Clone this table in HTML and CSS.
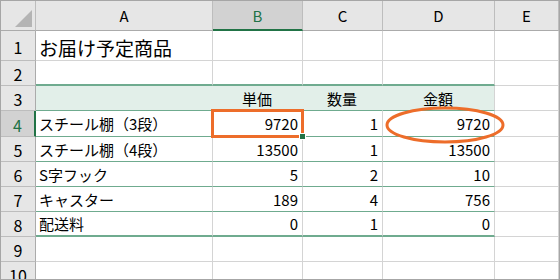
FILE: index.html
```html
<!DOCTYPE html>
<html lang="ja">
<head>
    <meta charset="UTF-8">
    <meta name="viewport" content="width=device-width, initial-scale=1.0">
    <title>お届け予定商品</title>
    <link rel="stylesheet" href="styles.css">
</head>
<body>
    <div class="sheet">
        <!-- column headers -->
        <div class="row head-row">
            <div class="corner"><span class="tri"></span></div>
            <div class="col-head">A</div>
            <div class="col-head selected">B</div>
            <div class="col-head">C</div>
            <div class="col-head">D</div>
            <div class="col-head">E</div>
        </div>

        <div class="row tall">
            <div class="row-head">1</div>
            <div class="cell title">お届け予定商品</div>
            <div class="cell"></div>
            <div class="cell"></div>
            <div class="cell"></div>
            <div class="cell"></div>
        </div>

        <div class="row">
            <div class="row-head">2</div>
            <div class="cell tbl-top"></div>
            <div class="cell tbl-top"></div>
            <div class="cell tbl-top"></div>
            <div class="cell tbl-top"></div>
            <div class="cell"></div>
        </div>

        <div class="row">
            <div class="row-head">3</div>
            <div class="cell th"></div>
            <div class="cell th center">単価</div>
            <div class="cell th center">数量</div>
            <div class="cell th center last">金額</div>
            <div class="cell"></div>
        </div>

        <div class="row r4">
            <div class="row-head selected">4</div>
            <div class="cell td">スチール棚（3段）</div>
            <div class="cell td num">9720</div>
            <div class="cell td num">1</div>
            <div class="cell td num">9720</div>
            <div class="cell"></div>
        </div>

        <div class="row">
            <div class="row-head">5</div>
            <div class="cell td">スチール棚（4段）</div>
            <div class="cell td num">13500</div>
            <div class="cell td num">1</div>
            <div class="cell td num">13500</div>
            <div class="cell"></div>
        </div>

        <div class="row">
            <div class="row-head">6</div>
            <div class="cell td">S字フック</div>
            <div class="cell td num">5</div>
            <div class="cell td num">2</div>
            <div class="cell td num">10</div>
            <div class="cell"></div>
        </div>

        <div class="row">
            <div class="row-head">7</div>
            <div class="cell td">キャスター</div>
            <div class="cell td num">189</div>
            <div class="cell td num">4</div>
            <div class="cell td num">756</div>
            <div class="cell"></div>
        </div>

        <div class="row">
            <div class="row-head">8</div>
            <div class="cell td end">配送料</div>
            <div class="cell td end num">0</div>
            <div class="cell td end num">1</div>
            <div class="cell td end num">0</div>
            <div class="cell"></div>
        </div>

        <div class="row">
            <div class="row-head">9</div>
            <div class="cell"></div>
            <div class="cell"></div>
            <div class="cell"></div>
            <div class="cell"></div>
            <div class="cell"></div>
        </div>

        <div class="row">
            <div class="row-head">10</div>
            <div class="cell"></div>
            <div class="cell"></div>
            <div class="cell"></div>
            <div class="cell"></div>
            <div class="cell"></div>
        </div>

        <!-- active cell B4 -->
        <div class="active-cell"><span class="handle"></span></div>

        <!-- circle round D4 -->
        <svg class="mark" width="124" height="42" viewBox="0 0 124 42">
            <ellipse cx="62" cy="21" rx="58" ry="17" fill="none" stroke="#ed6d2a" stroke-width="3"/>
        </svg>
    </div>
</body>
</html>
```

FILE: styles.css
```css
body {
    margin: 0;
    background: #fff;
    font-family: "Noto Sans CJK JP", "Noto Sans", sans-serif;
    color: #000;
}

.sheet {
    position: relative;
    width: 560px;
    height: 280px;
    box-sizing: border-box;
    border: 1px solid #a6a6a6;
    overflow: hidden;
}

.row {
    display: grid;
    grid-template-columns: 35px 177px 90px 80px 112px 1fr;
    height: 25px;
}

.head-row,
.tall {
    height: 30px;
}

.r4 {
    height: 26px;
}

.row > div {
    box-sizing: border-box;
    display: flex;
    align-items: center;
    border-right: 1px solid #d4d4d4;
    border-bottom: 1px solid #d4d4d4;
    overflow: hidden;
    white-space: nowrap;
}

/* headers */
.corner,
.col-head,
.row-head {
    background: #e6e6e6;
    justify-content: center;
    font-size: 15px;
}

.row > .corner,
.row > .col-head {
    border-right-color: #bdbdbd;
    border-bottom-color: #ababab;
}

.row > .row-head {
    border-right-color: #ababab;
    border-bottom-color: #bdbdbd;
    font-size: 16px;
    padding-top: 2px;
}

.corner {
    position: relative;
}

.tri {
    position: absolute;
    left: 14px;
    bottom: 3px;
    width: 0;
    height: 0;
    border-left: 17px solid transparent;
    border-bottom: 17px solid #b4b4b4;
}

.row > .col-head.selected {
    background: #d2d2d2;
    color: #217346;
    border-bottom: 2px solid #217346;
}

.row > .row-head.selected {
    background: #d2d2d2;
    color: #217346;
    border-right: 2px solid #217346;
}

/* cells */
.cell {
    padding: 0 4px 0 3px;
    font-size: 15px;
}

.title {
    font-size: 19px;
    padding-top: 3px;
}

.num {
    justify-content: flex-end;
}

.center {
    justify-content: center;
}

.row > .tbl-top {
    border-bottom: 2px solid #6fab8f;
}

.row > .th {
    background: #e2efe9;
    border-right-color: #e2efe9;
    border-bottom-color: #6fab8f;
}

.row > .th.last {
    border-right-color: #d4d4d4;
}

.row > .td {
    border-bottom-color: #6fab8f;
}

.row > .td.end {
    border-bottom: 2px solid #6fab8f;
}

/* overlays */
.active-cell {
    position: absolute;
    left: 210px;
    top: 108px;
    width: 93px;
    height: 29px;
    box-sizing: border-box;
    border: 3px solid #ed6d2a;
}

.handle {
    position: absolute;
    right: -5px;
    bottom: -5px;
    width: 5px;
    height: 5px;
    background: #217346;
    border: 1px solid #fff;
}

.mark {
    position: absolute;
    left: 382px;
    top: 103px;
}
```
